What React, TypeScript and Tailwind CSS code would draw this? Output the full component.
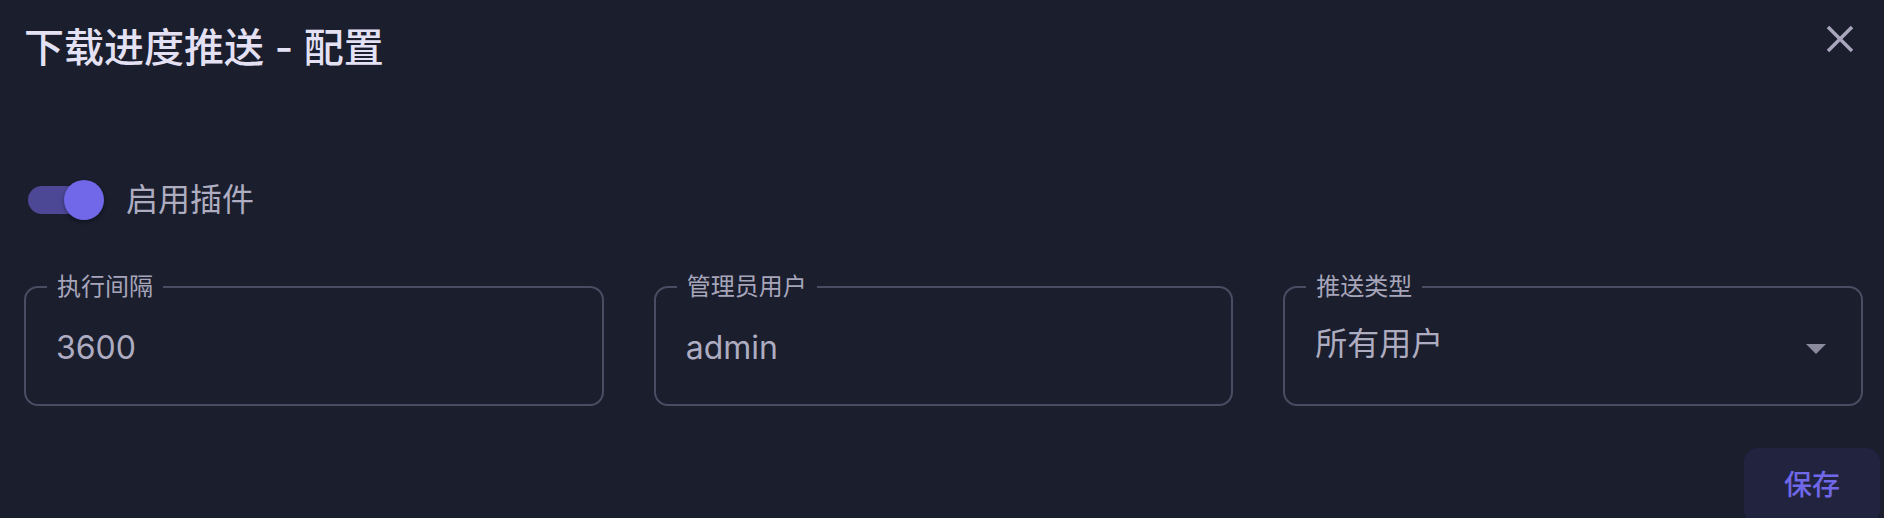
import React from "react";

const FONT = { fontFamily: 'Inter, "Noto Sans CJK SC", sans-serif' };

function Field({ label, value, select }: { label: string; value: string; select?: boolean }) {
  return (
    <fieldset className="min-w-0 rounded-[14px] border-2 border-[#4a4d62] p-0 m-0">
      <legend className="ml-[21px] px-[10px] text-[24px] leading-[24px] text-[#a7a5ba]">{label}</legend>
      <div className="flex h-[105px] items-center justify-between pl-[30px] pr-[35px]">
        <span
          className={
            select
              ? "mb-[16px] text-[32px] leading-[40px] text-[#aeacc0]"
              : "mb-[7px] text-[32px] leading-[40px] text-[#aeacc0]"
          }
        >
          {value}
        </span>
        {select && (
          <svg width="20" height="10" viewBox="0 0 20 10" className="mb-[5px]">
            <path d="M0 0 L20 0 L10 10 Z" fill="#8c8b9e" />
          </svg>
        )}
      </div>
    </fieldset>
  );
}

export default function App() {
  return (
    <div className="h-[518px] w-full overflow-hidden bg-[#1a1e2d]" style={FONT}>
      <div className="flex items-start justify-between pl-6 pr-[30px] pt-[28px]">
        <h1 className="text-[40px] font-medium leading-[40px] text-[#e4e1f4]">下载进度推送 - 配置</h1>
        <svg width="28" height="28" viewBox="0 0 28 28" className="-mt-[3px]">
          <path d="M2 2 L26 26 M26 2 L2 26" stroke="#a9a7bd" strokeWidth="3.5" />
        </svg>
      </div>

      <div className="mt-[112px] flex h-[40px] items-center pl-[28px]">
        <div className="relative flex h-[40px] w-[76px] items-center">
          <div className="h-[28px] w-[72px] rounded-full bg-[#4c4896]" />
          <div className="absolute right-0 top-0 h-[40px] w-[40px] rounded-full bg-[#7068e8] shadow-[0_2px_4px_rgba(0,0,0,0.35)]" />
        </div>
        <span className="ml-[22px] text-[32px] leading-[40px] text-[#aeacc0]">启用插件</span>
      </div>

      <div className="mt-[55px] grid grid-cols-3 gap-[50px] pl-6 pr-[21px]">
        <Field label="执行间隔" value="3600" />
        <Field label="管理员用户" value="admin" />
        <Field label="推送类型" value="所有用户" select />
      </div>

      <div className="mt-[42px] flex justify-end pr-[4px]">
        <button className="flex h-[76px] w-[136px] items-start justify-center rounded-[14px] bg-[#22243f] pt-[17px] text-[28px] leading-[40px] font-medium text-[#7068e8]">
          保存
        </button>
      </div>
    </div>
  );
}
